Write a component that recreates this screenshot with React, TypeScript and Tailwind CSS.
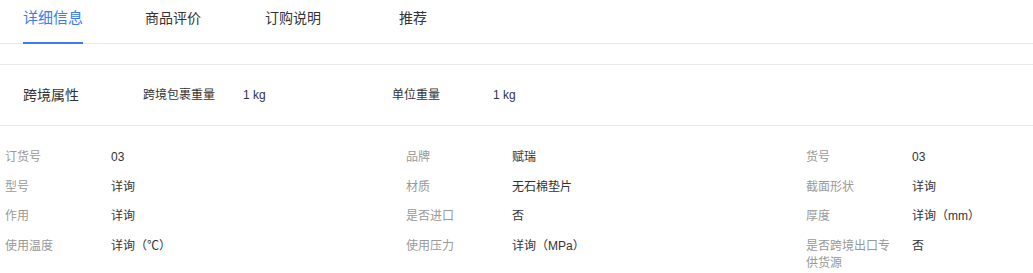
import React from "react";

const tabs = ["详细信息", "商品评价", "订购说明", "推荐"];

const specs: [string, string][][] = [
  [["订货号", "03"], ["品牌", "赋瑞"], ["货号", "03"]],
  [["型号", "详询"], ["材质", "无石棉垫片"], ["截面形状", "详询"]],
  [["作用", "详询"], ["是否进口", "否"], ["厚度", "详询（mm）"]],
  [["使用温度", "详询（℃）"], ["使用压力", "详询（MPa）"], ["是否跨境出口专供货源", "否"]],
];

export default function App() {
  return (
    <div
      className="w-[1033px] h-[273px] bg-white overflow-hidden text-[#333]"
      style={{ fontFamily: '"Liberation Sans", Arial, "Noto Sans CJK SC", sans-serif' }}
    >
      <div className="h-[44px] border-b border-[#e8e8e8]">
        <div className="flex ml-[-7px]">
          {tabs.map((t, i) => (
            <div key={t} className="w-[120px] h-[43px] flex justify-center">
              <div
                className={
                  "relative pt-[9px] leading-[18px] " +
                  (i === 0 ? "text-[15px] text-[#3a7bfa]" : "text-[14px] text-[#333]")
                }
              >
                {t}
                {i === 0 && (
                  <div className="absolute left-0 right-0 bottom-[-1px] h-[2px] bg-[#3a7bfa]" />
                )}
              </div>
            </div>
          ))}
        </div>
      </div>

      <div className="mt-[20px] border-t border-b border-[#e8e8e8] h-[62px] flex items-center">
        <div className="w-[143px] pl-[23px] text-[14px] leading-[20px] text-[#333]">跨境属性</div>
        <div className="w-[100px] text-[12px] leading-[16px] text-[#333]">跨境包裹重量</div>
        <div className="w-[149px] text-[12px] leading-[16px] text-[#33304a]">1 kg</div>
        <div className="w-[101px] text-[12px] leading-[16px] text-[#333]">单位重量</div>
        <div className="text-[12px] leading-[16px] text-[#33304a]">1 kg</div>
      </div>

      <div className="pt-[23px] pl-[5px] flex flex-col gap-y-[12.5px]">
        {specs.map((row, ri) => (
          <div key={ri} className="grid grid-cols-[401px_400px_1fr]">
            {row.map(([k, v]) => (
              <div key={k} className="flex text-[12px] leading-[17px]">
                <div className="w-[95px] mr-[11px] text-[#999]">{k}</div>
                <div className="text-[#333]">{v}</div>
              </div>
            ))}
          </div>
        ))}
      </div>
    </div>
  );
}
